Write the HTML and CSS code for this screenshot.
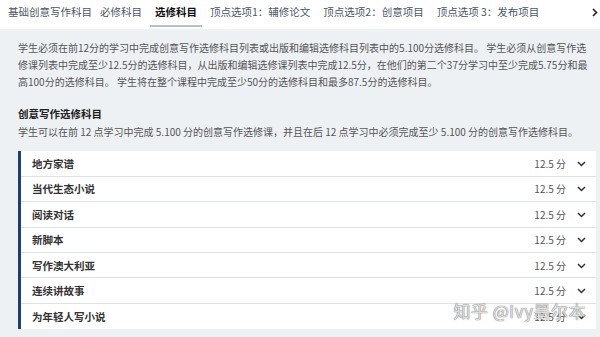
FILE: index.html
```html
<!DOCTYPE html>
<html lang="zh-CN">
<head>
<meta charset="utf-8">
<link rel="stylesheet" href="styles.css">
</head>
<body>
<nav class="tabs">
  <span class="tab">基础创意写作科目</span>
  <span class="tab">必修科目</span>
  <span class="tab active">选修科目</span>
  <span class="tab">顶点选项1：辅修论文</span>
  <span class="tab">顶点选项2：创意项目</span>
  <span class="tab">顶点选项 3：发布项目</span>
  <span class="more"><svg width="6" height="9" viewBox="0 0 6 9"><path d="M1 1l3.5 3.5L1 8" fill="none" stroke="#222" stroke-width="1.6"/></svg></span>
</nav>
<main class="content">
  <p class="intro">学生必须在前12分的学习中完成创意写作选修科目列表或出版和编辑选修科目列表中的5.100分选修科目。 学生必须从创意写作选修课列表中完成至少12.5分的选修科目，从出版和编辑选修课列表中完成12.5分，在他们的第二个37分学习中至少完成5.75分和最高100分的选修科目。 学生将在整个课程中完成至少50分的选修科目和最多87.5分的选修科目。</p>
  <h2 class="title">创意写作选修科目</h2>
  <p class="sub">学生可以在前 12 点学习中完成 5.100 分的创意写作选修课，并且在后 12 点学习中必须完成至少 5.100 分的创意写作选修科目。</p>
  <ul class="list">
    <li class="row"><span class="name">地方家谱</span><span class="pts">12.5 分</span><span class="chev"><svg width="9" height="6" viewBox="0 0 9 6"><path d="M1 1l3.5 3.5L8 1" fill="none" stroke="#333" stroke-width="1.5"/></svg></span></li>
    <li class="row"><span class="name">当代生态小说</span><span class="pts">12.5 分</span><span class="chev"><svg width="9" height="6" viewBox="0 0 9 6"><path d="M1 1l3.5 3.5L8 1" fill="none" stroke="#333" stroke-width="1.5"/></svg></span></li>
    <li class="row"><span class="name">阅读对话</span><span class="pts">12.5 分</span><span class="chev"><svg width="9" height="6" viewBox="0 0 9 6"><path d="M1 1l3.5 3.5L8 1" fill="none" stroke="#333" stroke-width="1.5"/></svg></span></li>
    <li class="row"><span class="name">新脚本</span><span class="pts">12.5 分</span><span class="chev"><svg width="9" height="6" viewBox="0 0 9 6"><path d="M1 1l3.5 3.5L8 1" fill="none" stroke="#333" stroke-width="1.5"/></svg></span></li>
    <li class="row"><span class="name">写作澳大利亚</span><span class="pts">12.5 分</span><span class="chev"><svg width="9" height="6" viewBox="0 0 9 6"><path d="M1 1l3.5 3.5L8 1" fill="none" stroke="#333" stroke-width="1.5"/></svg></span></li>
    <li class="row"><span class="name">连续讲故事</span><span class="pts">12.5 分</span><span class="chev"><svg width="9" height="6" viewBox="0 0 9 6"><path d="M1 1l3.5 3.5L8 1" fill="none" stroke="#333" stroke-width="1.5"/></svg></span></li>
    <li class="row"><span class="name">为年轻人写小说</span><span class="pts">12.5 分</span><span class="chev"><svg width="9" height="6" viewBox="0 0 9 6"><path d="M1 1l3.5 3.5L8 1" fill="none" stroke="#333" stroke-width="1.5"/></svg></span></li>
  </ul>
  <div class="watermark">知乎 @Ivy墨尔本</div>
</main>
</body>
</html>
```
FILE: styles.css
```css
* { box-sizing: border-box; }
html, body { margin: 0; padding: 0; }
body {
  width: 600px;
  height: 337px;
  overflow: hidden;
  background: #eef1f4;
  font-family: "Noto Sans CJK SC", "Noto Sans", sans-serif;
  color: #555;
}
.tabs {
  height: 29px;
  background: #fff;
  display: flex;
  align-items: flex-start;
  gap: 13px;
  padding: 4px 0 0 8px;
  font-size: 10.5px;
  line-height: 16px;
  color: #4b5666;
}
.tab { position: relative; white-space: nowrap; }
.tab:first-child { margin-right: -5px; }
.tab.active {
  color: #111;
  font-weight: 700;
}
.tab.active::after {
  content: "";
  position: absolute;
  left: -5px;
  right: -5px;
  top: 21px;
  height: 2px;
  background: #b6bfd3;
}
.more {
  margin-left: auto;
  padding: 4px 2px 0 0;
  line-height: 0;
}
.content {
  position: relative;
  padding: 11px 4px 0 18px;
}
.intro {
  margin: 0;
  font-size: 10px;
  line-height: 16.8px;
  color: #555;
}
.title {
  margin: 16px 0 0;
  font-size: 10.5px;
  line-height: 16px;
  font-weight: 700;
  color: #222;
}
.sub {
  margin: 1px 0 0;
  font-size: 10px;
  line-height: 18px;
  color: #555;
}
.list {
  list-style: none;
  margin: 10px 0 0;
  padding: 0;
  background: #fff;
  border-left: 3px solid #1f3d78;
}
.row {
  height: 25.4px;
  display: flex;
  align-items: center;
  padding: 0 10px 0 11px;
  border-bottom: 1px solid #dbe2ea;
}
.row:last-child { border-bottom: none; }
.name {
  flex: 1;
  font-size: 10.5px;
  font-weight: 700;
  color: #333;
}
.pts {
  font-size: 10px;
  color: #555;
  margin-right: 11px;
}
.chev { line-height: 0; }
.watermark {
  position: absolute;
  right: 14px;
  top: 272px;
  font-size: 17px;
  line-height: 20px;
  color: rgba(255, 255, 255, 0.75);
  text-shadow: 0 0 1px #777, 0 0 1px #777;
  letter-spacing: 0.5px;
  white-space: nowrap;
}
```
